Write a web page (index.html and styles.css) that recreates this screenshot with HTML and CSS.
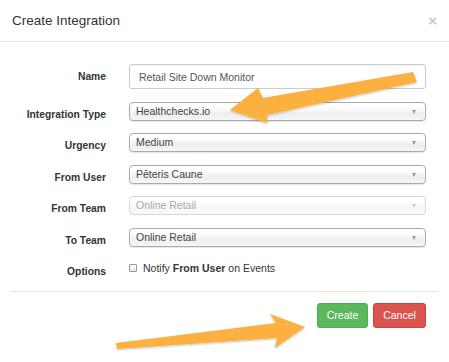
FILE: index.html
```html
<!DOCTYPE html>
<html>

<head>
	<title>Create Integration</title>
	<meta name="viewport" content="width=device-width, initial-scale=1">
	<link rel="stylesheet" href="styles.css">
</head>

<body>
	<div class="modal">
		<div class="modal-header">
			<span class="close">&times;</span>
			<h4 class="modal-title">Create Integration</h4>
		</div>

		<form class="modal-body">
			<div class="form-row name-row">
				<label>Name</label>
				<input type="text" class="text-input" value="Retail Site Down Monitor">
			</div>
			<div class="form-row">
				<label>Integration Type</label>
				<div class="chosen"><span>Healthchecks.io</span></div>
			</div>
			<div class="form-row">
				<label>Urgency</label>
				<div class="chosen"><span>Medium</span></div>
			</div>
			<div class="form-row">
				<label>From User</label>
				<div class="chosen"><span>Pēteris Caune</span></div>
			</div>
			<div class="form-row">
				<label>From Team</label>
				<div class="chosen disabled"><span>Online Retail</span></div>
			</div>
			<div class="form-row">
				<label>To Team</label>
				<div class="chosen"><span>Online Retail</span></div>
			</div>
			<div class="form-row">
				<label>Options</label>
				<div class="checkbox"><span class="box"></span>Notify <b>From User</b> on Events</div>
			</div>

			<div class="modal-footer">
				<button type="button" class="btn btn-success">Create</button>
				<button type="button" class="btn btn-danger">Cancel</button>
			</div>
		</form>
	</div>

	<!-- annotation arrows drawn over the screenshot -->
	<svg class="arrows" width="449" height="362" viewBox="0 0 449 362">
		<defs>
			<filter id="shade" x="-10%" y="-30%" width="120%" height="160%">
				<feDropShadow dx="0" dy="1" stdDeviation="1" flood-color="#000" flood-opacity="0.25"/>
			</filter>
		</defs>
		<polygon filter="url(#shade)" fill="#fbb040"
			points="230,110 258,88 263,98 413,72 417,82 267,115 267,123"/>
		<polygon filter="url(#shade)" fill="#fbb040"
			points="305,327 270,314 276,323 116,343 117,349 277,338 275,348"/>
	</svg>
</body>

</html>
```

FILE: styles.css
```css
body {
	margin: 0;
	font-family: 'Liberation Sans', Arial, sans-serif;
	color: #333;
	background: #fff;
}

.modal {
	width: 449px;
}

.modal-header {
	padding: 10.5px 12px 11px;
	border-bottom: 1px solid #e5e5e5;
}

.modal-title {
	margin: 0;
	font-size: 13.5px;
	line-height: 19.5px;
	font-weight: normal;
}

.close {
	float: right;
	font-size: 15px;
	line-height: 19.5px;
	font-weight: bold;
	color: #c8c8c8;
}

.modal-body {
	padding: 22px 11px 0;
}

.form-row {
	display: grid;
	grid-template-columns: 95px 297px;
	column-gap: 23px;
	margin-bottom: 12.5px;
}

label {
	display: block;
	text-align: right;
	font-weight: bold;
	font-size: 10.3px;
	line-height: 13px;
	padding-top: 6px;
}

.text-input {
	height: 25px;
	box-sizing: border-box;
	padding: 0 9px;
	border: 1px solid #ccc;
	border-radius: 3px;
	font-family: inherit;
	font-size: 10.5px;
	color: #555;
	box-shadow: inset 0 1px 1px rgba(0, 0, 0, .06);
	margin: 0;
}

.chosen {
	position: relative;
	height: 19px;
	box-sizing: border-box;
	border: 1px solid #aaa;
	border-radius: 4px;
	background: linear-gradient(#fff 20%, #f6f6f6 50%, #eee 52%, #f4f4f4 100%);
	box-shadow: inset 0 0 3px #fff, 0 1px 1px rgba(0, 0, 0, .1);
	font-size: 10.5px;
	line-height: 17px;
	color: #444;
	padding-left: 6px;
}

.chosen::after {
	content: "";
	position: absolute;
	right: 9px;
	top: 7px;
	border-left: 2.5px solid transparent;
	border-right: 2.5px solid transparent;
	border-top: 4px solid #999;
}

.chosen.disabled {
	border-color: #d6d6d6;
	background: linear-gradient(#fff 20%, #fafafa 50%, #f6f6f6 52%, #f9f9f9 100%);
	color: #aaa;
	box-shadow: none;
}

.chosen.disabled::after {
	border-top-color: #ccc;
}

.checkbox {
	font-size: 10.5px;
	line-height: 15px;
	padding-top: 1.5px;
	display: flex;
	align-items: center;
	align-self: start;
}

.checkbox b {
	margin: 0 3px;
}

.box {
	width: 8px;
	height: 8px;
	box-sizing: border-box;
	border: 1px solid #999;
	border-radius: 1px;
	background: linear-gradient(#fff, #e6e6e6);
	margin-right: 6px;
}

.modal-footer {
	margin-top: 11.5px;
	border-top: 1px solid #e5e5e5;
	padding: 11px 12px 0 0;
	display: flex;
	justify-content: flex-end;
	gap: 5px;
}

.btn {
	height: 25px;
	border: 1px solid transparent;
	border-radius: 3px;
	font-family: inherit;
	font-size: 10.5px;
	color: #fff;
	padding: 0;
	margin: 0;
}

.btn-success {
	width: 51px;
	background-color: #5cb85c;
	border-color: #4cae4c;
}

.btn-danger {
	width: 53px;
	background-color: #d9534f;
	border-color: #d43f3a;
}

.arrows {
	position: absolute;
	left: 0;
	top: 0;
	pointer-events: none;
}
```
